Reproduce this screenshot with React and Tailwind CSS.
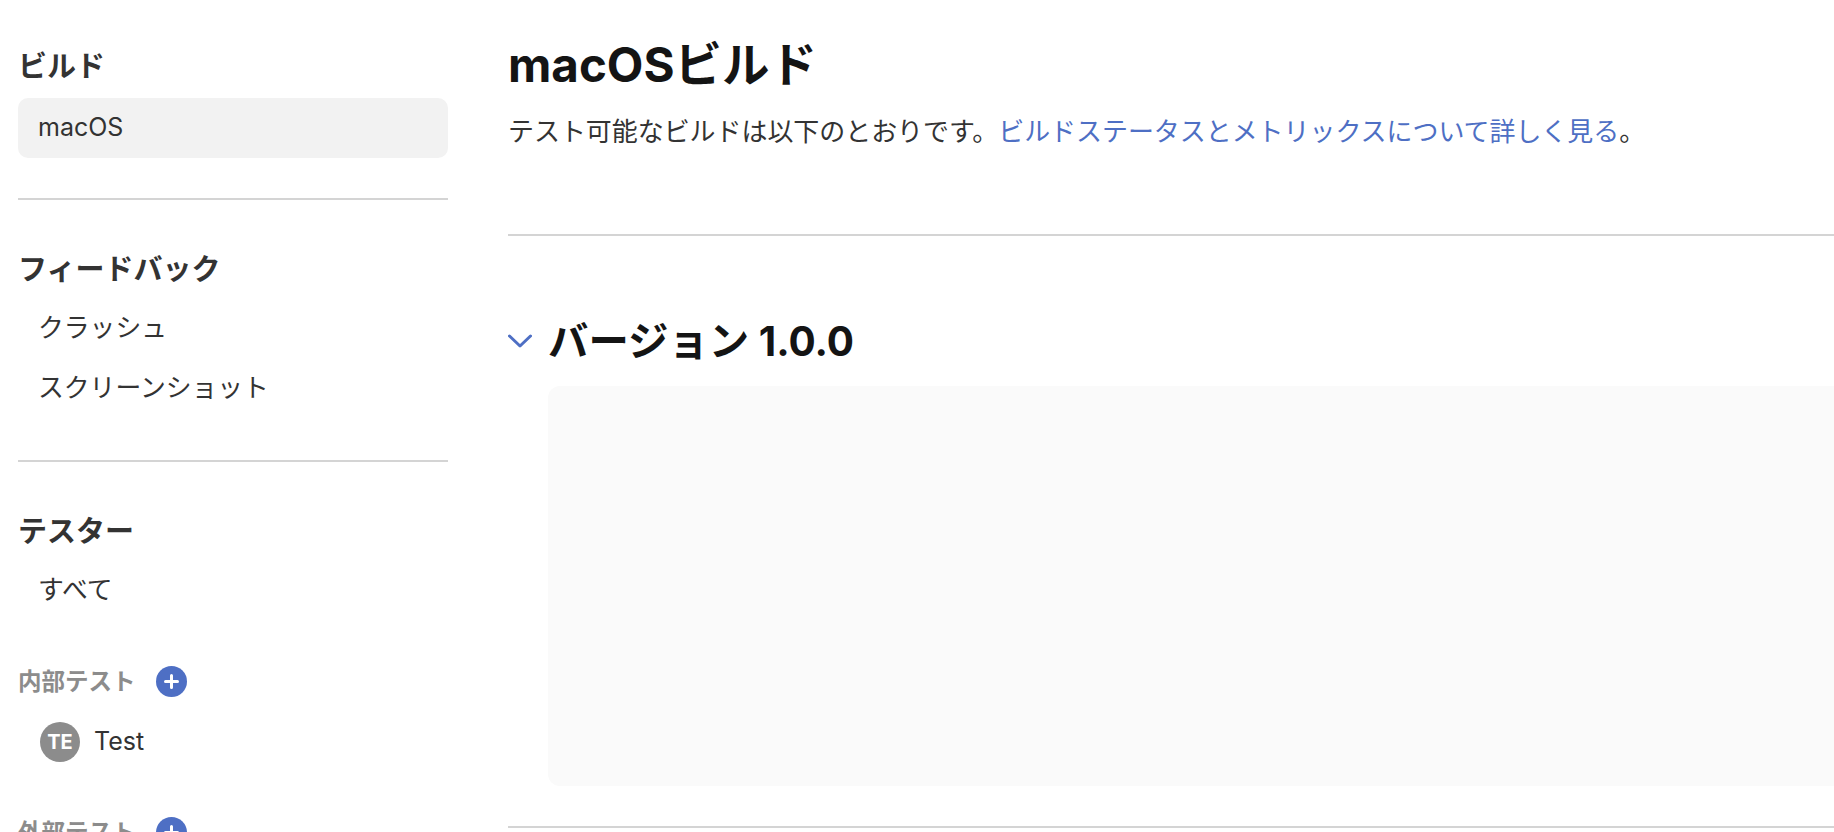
import React from 'react';

const FONT = "font-['Inter','Noto_Sans_CJK_JP',sans-serif]";

const PlusBadge = () => (
  <span className="flex h-[31px] w-[31px] shrink-0 items-center justify-center rounded-full bg-[#4e6fc4]">
    <svg className="h-[17px] w-[17px]" viewBox="0 0 17 17" fill="none" stroke="#fff" strokeWidth={3} strokeLinecap="round">
      <path d="M8.5 2.5v12M2.5 8.5h12" />
    </svg>
  </span>
);

const SectionTitle = ({ children }) => (
  <h2 className="text-[29px] leading-[34px] font-bold text-[#333]">{children}</h2>
);

const NavItem = ({ children, active }) => (
  <div className={`flex h-[60px] items-center rounded-[10px] px-[20px] text-[25.8px] text-[#333] ${active ? 'bg-[#f2f2f2]' : ''}`}>
    {children}
  </div>
);

const GroupLabel = ({ children }) => (
  <div className="flex h-[31px] items-center gap-[20px] text-[23.5px] font-semibold text-[#8c8c8c]">
    <span>{children}</span>
    <PlusBadge />
  </div>
);

export default function App() {
  return (
    <div className={`${FONT} flex h-screen overflow-hidden bg-white`}>
      {/* Sidebar */}
      <aside className="ml-[18px] w-[430px] shrink-0 pt-[50px]">
        <SectionTitle>ビルド</SectionTitle>
        <div className="mt-[14px]">
          <NavItem active><span className="text-[25px]">macOS</span></NavItem>
        </div>
        <div className="mt-[40px] h-[2px] bg-[#d4d4d4]" />

        <div className="mt-[53px]">
          <SectionTitle>フィードバック</SectionTitle>
        </div>
        <div className="mt-[11px]">
          <NavItem>クラッシュ</NavItem>
          <NavItem>スクリーンショット</NavItem>
        </div>
        <div className="mt-[42px] h-[2px] bg-[#d4d4d4]" />

        <div className="mt-[53px]">
          <SectionTitle>テスター</SectionTitle>
        </div>
        <div className="mt-[11px]">
          <NavItem>すべて</NavItem>
        </div>

        <div className="mt-[46px]">
          <GroupLabel>内部テスト</GroupLabel>
        </div>
        <div className="mt-[15px] flex h-[60px] items-center gap-[14px] pl-[22px] text-[25px] text-[#333]">
          <span className="flex h-[40px] w-[40px] items-center justify-center rounded-full bg-[#8c8c8c] text-[20px] font-bold text-white">TE</span>
          <span>Test</span>
        </div>
        <div className="mt-[45px]">
          <GroupLabel>外部テスト</GroupLabel>
        </div>
      </aside>

      {/* Main */}
      <main className="ml-[60px] min-w-0 flex-1 pt-[34px]">
        <h1 className="text-[47.5px] leading-[62px] font-bold text-[#141414]">macOSビルド</h1>
        <p className="mt-[18px] text-[25.95px] leading-[36px] text-[#333]">
          テスト可能なビルドは以下のとおりです。
          <span className="text-[#4e6fc4]">ビルドステータスとメトリックスについて詳しく見る</span>
          。
        </p>
        <div className="mt-[84px] h-[2px] bg-[#d4d4d4]" />

        <div className="mt-[75px] flex h-[60px] items-center">
          <svg className="h-[14px] w-[24px] shrink-0" viewBox="0 0 24 14" fill="none" stroke="#4e6fc4" strokeWidth={3} strokeLinecap="round" strokeLinejoin="round">
            <path d="M1.5 2l10.5 10L22.5 2" />
          </svg>
          <h2 className="ml-[16px] pt-[2px] text-[40.4px] leading-[46px] font-bold text-[#141414]">バージョン 1.0.0</h2>
        </div>
        <div className="mt-[15px] ml-[40px] h-[400px] rounded-l-[12px] bg-[#fafafa]" />
        <div className="mt-[40px] h-[2px] bg-[#d4d4d4]" />
      </main>
    </div>
  );
}
